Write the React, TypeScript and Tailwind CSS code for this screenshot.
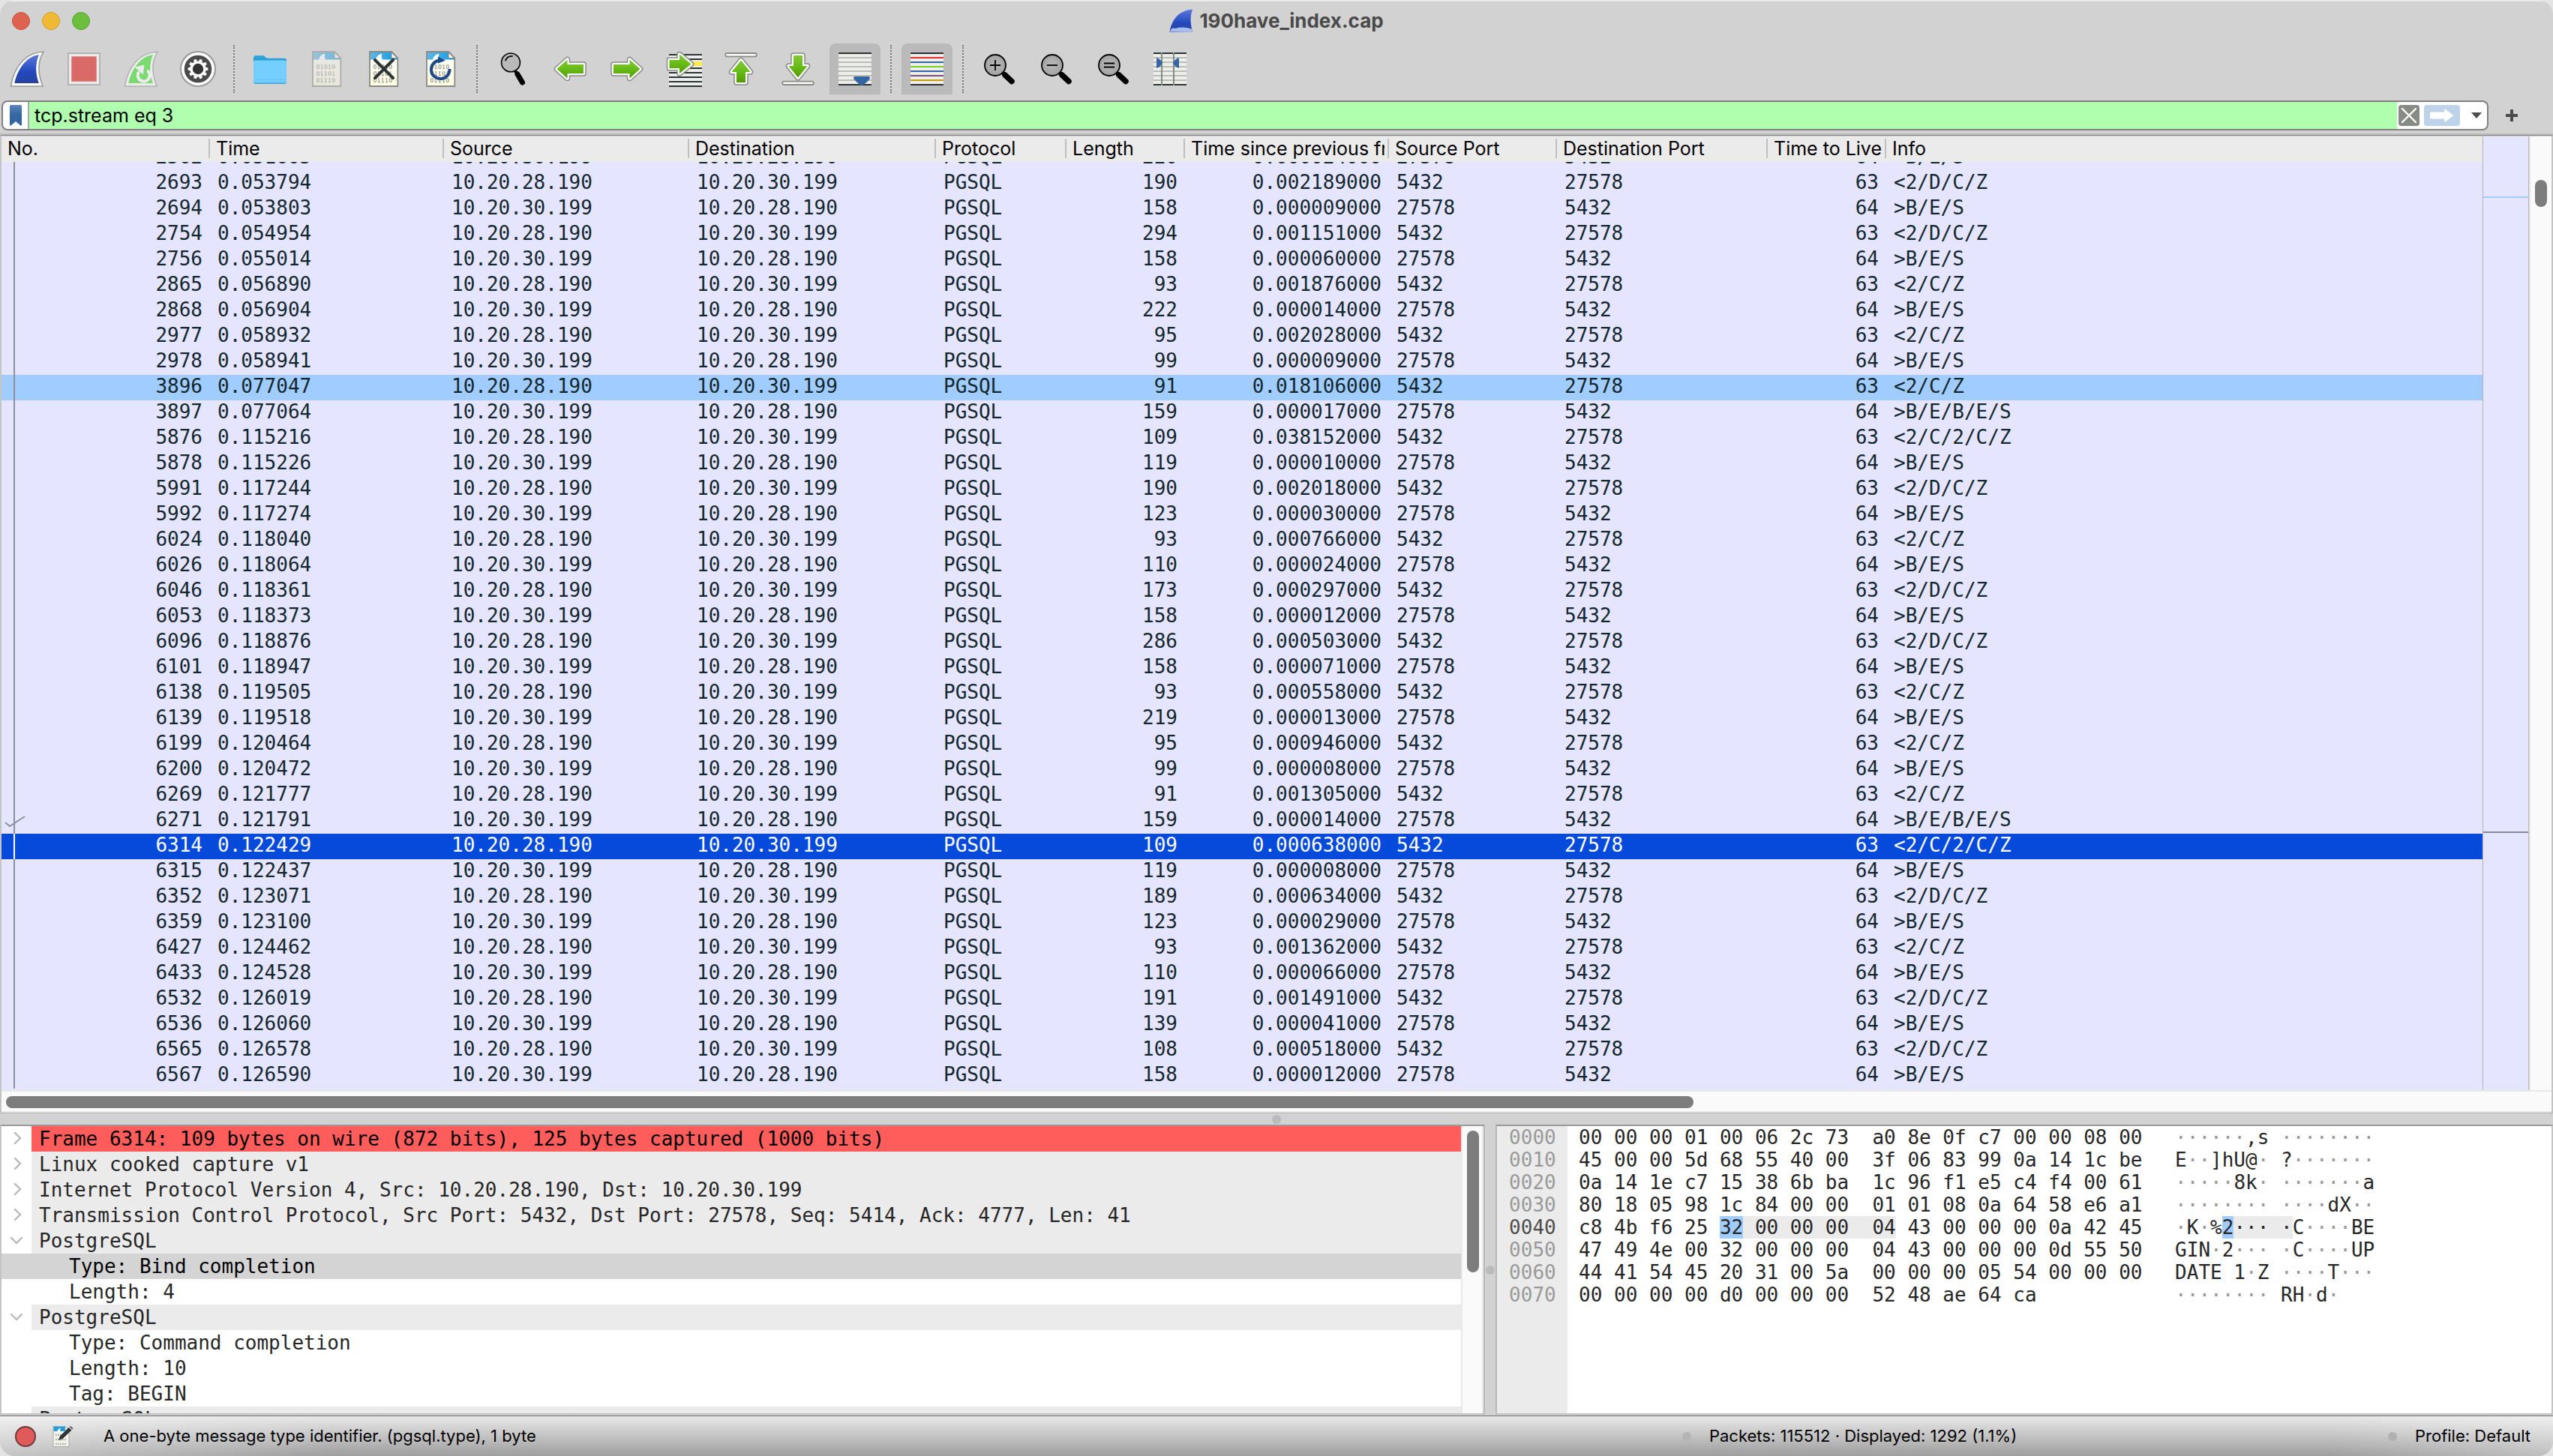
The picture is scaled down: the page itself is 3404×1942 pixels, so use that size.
import React from "react";

const MONO = "font-['DejaVu_Sans_Mono','Liberation_Mono',monospace] text-[26px]";

type Packet = {
  no: string;
  time: string;
  length: string;
  delta: string;
  info: string;
};

const packets: Packet[] = [
  ["2562", "0.051605", "220", "0.000024000", ">B/E/S"],
  ["2693", "0.053794", "190", "0.002189000", "<2/D/C/Z"],
  ["2694", "0.053803", "158", "0.000009000", ">B/E/S"],
  ["2754", "0.054954", "294", "0.001151000", "<2/D/C/Z"],
  ["2756", "0.055014", "158", "0.000060000", ">B/E/S"],
  ["2865", "0.056890", "93", "0.001876000", "<2/C/Z"],
  ["2868", "0.056904", "222", "0.000014000", ">B/E/S"],
  ["2977", "0.058932", "95", "0.002028000", "<2/C/Z"],
  ["2978", "0.058941", "99", "0.000009000", ">B/E/S"],
  ["3896", "0.077047", "91", "0.018106000", "<2/C/Z"],
  ["3897", "0.077064", "159", "0.000017000", ">B/E/B/E/S"],
  ["5876", "0.115216", "109", "0.038152000", "<2/C/2/C/Z"],
  ["5878", "0.115226", "119", "0.000010000", ">B/E/S"],
  ["5991", "0.117244", "190", "0.002018000", "<2/D/C/Z"],
  ["5992", "0.117274", "123", "0.000030000", ">B/E/S"],
  ["6024", "0.118040", "93", "0.000766000", "<2/C/Z"],
  ["6026", "0.118064", "110", "0.000024000", ">B/E/S"],
  ["6046", "0.118361", "173", "0.000297000", "<2/D/C/Z"],
  ["6053", "0.118373", "158", "0.000012000", ">B/E/S"],
  ["6096", "0.118876", "286", "0.000503000", "<2/D/C/Z"],
  ["6101", "0.118947", "158", "0.000071000", ">B/E/S"],
  ["6138", "0.119505", "93", "0.000558000", "<2/C/Z"],
  ["6139", "0.119518", "219", "0.000013000", ">B/E/S"],
  ["6199", "0.120464", "95", "0.000946000", "<2/C/Z"],
  ["6200", "0.120472", "99", "0.000008000", ">B/E/S"],
  ["6269", "0.121777", "91", "0.001305000", "<2/C/Z"],
  ["6271", "0.121791", "159", "0.000014000", ">B/E/B/E/S"],
  ["6314", "0.122429", "109", "0.000638000", "<2/C/2/C/Z"],
  ["6315", "0.122437", "119", "0.000008000", ">B/E/S"],
  ["6352", "0.123071", "189", "0.000634000", "<2/D/C/Z"],
  ["6359", "0.123100", "123", "0.000029000", ">B/E/S"],
  ["6427", "0.124462", "93", "0.001362000", "<2/C/Z"],
  ["6433", "0.124528", "110", "0.000066000", ">B/E/S"],
  ["6532", "0.126019", "191", "0.001491000", "<2/D/C/Z"],
  ["6536", "0.126060", "139", "0.000041000", ">B/E/S"],
  ["6565", "0.126578", "108", "0.000518000", "<2/D/C/Z"],
  ["6567", "0.126590", "158", "0.000012000", ">B/E/S"],
].map(([no, time, length, delta, info]) => ({ no, time, length, delta, info }));

const columns = [
  { name: "No.", width: "w-[276px]" },
  { name: "Time", width: "w-[312px]" },
  { name: "Source", width: "w-[327px]" },
  { name: "Destination", width: "w-[329px]" },
  { name: "Protocol", width: "w-[174px]" },
  { name: "Length", width: "w-[158px]" },
  { name: "Time since previous frame", width: "w-[272px]" },
  { name: "Source Port", width: "w-[224px]" },
  { name: "Destination Port", width: "w-[281px]" },
  { name: "Time to Live", width: "w-[158px]" },
  { name: "Info", width: "w-auto" },
];

const hexRows = [
  ["0000", "00 00 00 01 00 06 2c 73  a0 8e 0f c7 00 00 08 00", "······,s ········"],
  ["0010", "45 00 00 5d 68 55 40 00  3f 06 83 99 0a 14 1c be", "E··]hU@· ?·······"],
  ["0020", "0a 14 1e c7 15 38 6b ba  1c 96 f1 e5 c4 f4 00 61", "·····8k· ·······a"],
  ["0030", "80 18 05 98 1c 84 00 00  01 01 08 0a 64 58 e6 a1", "········ ····dX··"],
  ["0040", "c8 4b f6 25 32 00 00 00  04 43 00 00 00 0a 42 45", "·K·%2··· ·C····BE"],
  ["0050", "47 49 4e 00 32 00 00 00  04 43 00 00 00 0d 55 50", "GIN·2··· ·C····UP"],
  ["0060", "44 41 54 45 20 31 00 5a  00 00 00 05 54 00 00 00", "DATE 1·Z ····T···"],
  ["0070", "00 00 00 00 d0 00 00 00  52 48 ae 64 ca", "········ RH·d·"],
];

/* ---------- toolbar icons, all on a 48 px grid ---------- */

function Svg({ children }: { children: React.ReactNode }) {
  return (
    <svg viewBox="0 0 48 48" className="size-12" aria-hidden="true">
      {children}
    </svg>
  );
}

function Gradients() {
  return (
    <svg className="absolute size-0" aria-hidden="true">
      <defs>
        <linearGradient id="finBlue" x1="0" y1="0" x2="0" y2="1">
          <stop offset="0" stopColor="#5a78dc" />
          <stop offset="0.6" stopColor="#2448bd" />
          <stop offset="1" stopColor="#27429f" />
        </linearGradient>
        <linearGradient id="green" x1="0" y1="0" x2="0" y2="1">
          <stop offset="0" stopColor="#80c83c" />
          <stop offset="0.5" stopColor="#68bc16" />
          <stop offset="1" stopColor="#4e9a06" />
        </linearGradient>
        <linearGradient id="folder" x1="0" y1="0" x2="0" y2="1">
          <stop offset="0" stopColor="#34aadc" />
          <stop offset="1" stopColor="#0e84c4" />
        </linearGradient>
        <linearGradient id="docTop" x1="0" y1="0" x2="1" y2="0">
          <stop offset="0" stopColor="#62b6e2" />
          <stop offset="1" stopColor="#0e9de6" />
        </linearGradient>
        <linearGradient id="docPaper" x1="0" y1="0" x2="0" y2="1">
          <stop offset="0" stopColor="#ffffff" />
          <stop offset="1" stopColor="#fffee0" />
        </linearGradient>
        <linearGradient id="bookmark" x1="0" y1="0" x2="0" y2="1">
          <stop offset="0" stopColor="#5b86b8" />
          <stop offset="0.5" stopColor="#3465a4" />
          <stop offset="1" stopColor="#3465a4" />
        </linearGradient>
        <radialGradient id="lens">
          <stop offset="0" stopColor="#bababa" />
          <stop offset="1" stopColor="#a2a2a2" />
        </radialGradient>
      </defs>
    </svg>
  );
}

const FIN_OUTER = "M2.5 47 C6 24 20 2 46 1.2 C38 14 38 29 45 47 Z";
const FIN_INNER = "M7.3 43 C11.5 25 22 7.5 40 5 C35 16 35 30 39.8 43 Z";

function StartIcon() {
  return (
    <Svg>
      <path d={FIN_OUTER} fill="#fff" stroke="#9a9a9a" strokeWidth="1.6" />
      <path d={FIN_INNER} fill="url(#finBlue)" />
    </Svg>
  );
}

function StopIcon() {
  return (
    <Svg>
      <rect x="3" y="3" width="42" height="42" fill="#ececec" stroke="#b3b3b3" strokeWidth="2" />
      <rect x="7.3" y="7.3" width="33.4" height="33.4" fill="#d96a68" />
    </Svg>
  );
}

function RestartIcon() {
  return (
    <Svg>
      <path d={FIN_OUTER} fill="#ececec" stroke="#b3b3b3" strokeWidth="1.6" />
      <path d={FIN_INNER} fill="#7ada70" />
      <path
        d="M20.5 29 A8 8 0 1 0 33.5 27"
        fill="none"
        stroke="#ececec"
        strokeWidth="4"
        strokeLinecap="round"
      />
      <path d="M15.5 21.5 L28.5 18.6 L26.8 31.5 Z" fill="#ececec" />
    </Svg>
  );
}

function GearIcon() {
  const teeth = [0, 36, 72, 108, 144, 180, 216, 252, 288, 324];
  return (
    <Svg>
      <circle cx="24" cy="24" r="23" fill="#fff" stroke="#9a9a9a" strokeWidth="2" />
      <circle cx="24" cy="24" r="18.3" fill="#4a4a4a" />
      <circle cx="24" cy="24" r="10.6" fill="#fff" />
      {teeth.map((a) => (
        <path key={a} d="M21.6 14 L22.4 10.6 H25.6 L26.4 14 Z" fill="#fff" transform={`rotate(${a + 18} 24 24)`} />
      ))}
      <circle cx="24" cy="24" r="7.2" fill="#333" />
    </Svg>
  );
}

function FolderIcon() {
  return (
    <Svg>
      <path d="M2 9 q0-3 3-3 h9 q2 0 3 1.2 l1.5 1.6 q1 1 3 1 h21.5 q3 0 3 3 v10 H2 Z" fill="url(#folder)" />
      <rect x="2" y="12.5" width="44" height="31.5" rx="3" fill="#4aa8dd" />
      <rect x="2" y="12.5" width="44" height="29.8" rx="2.5" fill="#74ceff" />
      <path d="M2.5 38.5 H45.5" stroke="#67bfee" strokeWidth="1" />
    </Svg>
  );
}

function Bits() {
  return (
    <g fill="none" stroke="#a9aaa3" strokeWidth="1.3">
      {[18.5, 27.5, 36.5].map((y, row) =>
        [0, 1, 2, 3, 4].map((i) => {
          const x = 11 + i * 5.2;
          const one = ["01010", "01101", "01110"][row][i] === "1";
          return one ? (
            <path key={`${y}-${i}`} d={`M${x - 0.5} ${y + 0.8} L${x + 1} ${y} V${y + 5} M${x - 0.5} ${y + 5} H${x + 2.6}`} />
          ) : (
            <ellipse key={`${y}-${i}`} cx={x + 1} cy={y + 2.6} rx="1.6" ry="2.4" />
          );
        })
      )}
    </g>
  );
}

function Page({ faded = false, children }: { faded?: boolean; children?: React.ReactNode }) {
  return (
    <Svg>
      <g opacity={faded ? 0.5 : 1}>
        <path d="M5 1 H34 L42.3 9.5 V47 H5 Z" fill="url(#docPaper)" />
        <path d="M5 1 H34 V9.5 H42 V11.5 H5 Z" fill="url(#docTop)" />
        <path d="M13 11.8 C14 7 17 4.5 21.5 3.5 C20.5 6 20.7 9 22 11.8 Z" fill="#fff" />
        <path d="M34 1 L42.3 9.5 H34 Z" fill="#fff" stroke="#888a85" strokeWidth="1.2" />
        <path d="M5 1 H34 L42.3 9.5 V47 H5 Z" fill="none" stroke="#888a85" strokeWidth="1.8" />
        <Bits />
      </g>
      {children}
    </Svg>
  );
}

function CloseFileIcon() {
  return (
    <Page>
      <path d="M12 12 L36 36 M36 12 L12 36" stroke="#2e3436" strokeWidth="4" strokeLinecap="round" />
    </Page>
  );
}

function ReloadIcon() {
  return (
    <Page>
      <path d="M22 12.5 A12.3 12.3 0 1 0 35.5 24" fill="none" stroke="#204a87" strokeWidth="4" />
      <path d="M20 7.5 L30 12.8 L20 16.5 Z" fill="#204a87" />
    </Page>
  );
}

function FindIcon() {
  return (
    <Svg>
      <circle cx="21" cy="15.4" r="12.4" fill="#b9b9b9" stroke="#000" strokeWidth="1.6" />
      <path d="M14 12.5 Q16.5 6.5 23 6.8" fill="none" stroke="#000" strokeWidth="1.8" strokeLinecap="round" />
      <path d="M27 27 L30 31" stroke="#000" strokeWidth="4" />
      <path d="M30 31 L36.5 42" stroke="#000" strokeWidth="7" strokeLinecap="round" />
    </Svg>
  );
}

function Arrow({ d }: { d: string }) {
  return (
    <g strokeLinejoin="round">
      <path d={d} fill="#888a85" stroke="#888a85" strokeWidth="7.6" />
      <path d={d} fill="#fff" stroke="#fff" strokeWidth="4.6" />
      <path d={d} fill="url(#green)" />
    </g>
  );
}

const BackIcon = () => (
  <Svg>
    <Arrow d="M6.5 24 L20.5 11.5 V18 H42 V30 H20.5 V36.5 Z" />
  </Svg>
);
const ForwardIcon = () => (
  <Svg>
    <Arrow d="M41.5 24 L27.5 11.5 V18 H6 V30 H27.5 V36.5 Z" />
  </Svg>
);
const GoToIcon = () => (
  <Svg>
    <rect x="4" y="4" width="44" height="44" fill="#eeeeec" />
    <rect x="34" y="14" width="14" height="6" fill="#fce94f" />
    <path
      d="M4 5 H48 M4 11 H48 M4 23 H48 M4 29 H48 M4 35 H48 M4 41 H48 M4 47 H48"
      stroke="#2e3436"
      strokeWidth="2"
    />
    <Arrow d="M4.5 12 H18 V4.5 L33.5 17.5 L18 30 V23 H4.5 Z" />
  </Svg>
);
const FirstIcon = () => (
  <Svg>
    <rect x="3.2" y="3" width="41.6" height="4.4" rx="2" fill="#fff" stroke="#888a85" strokeWidth="1.8" />
    <Arrow d="M24 12.5 L36.5 28 H30 V42 H18 V28 H11.5 Z" />
  </Svg>
);
const LastIcon = () => (
  <Svg>
    <rect x="3.2" y="40.6" width="41.6" height="4.4" rx="2" fill="#fff" stroke="#888a85" strokeWidth="1.8" />
    <Arrow d="M24 35.5 L11.5 20 H18 V6 H30 V20 H36.5 Z" />
  </Svg>
);

function Lines({ colors }: { colors: string[] }) {
  return (
    <>
      <rect x="2" y="2" width="44" height="44" fill="#eeeeec" />
      {["#2e3436", ...colors, "#2e3436"].map((c, i) => (
        <rect key={i} x="2" y={2 + i * 6} width="44" height="2" fill={c} />
      ))}
    </>
  );
}

const GRAY_LINES = ["#babdb6", "#babdb6", "#babdb6", "#babdb6", "#babdb6", "#babdb6"];

const AutoScrollIcon = () => (
  <Svg>
    <Lines colors={GRAY_LINES} />
    <path d="M24 34 H42 Q45 34.5 43.5 37.5 Q40 42 35 45 Q33 46.5 31 45 Q26 42 22.5 37.5 Q21 34.5 24 34 Z" fill="#3465a4" />
  </Svg>
);
const ColorizeIcon = () => (
  <Svg>
    <Lines colors={["#ef2929", "#3465a4", "#73d216", "#3465a4", "#75507b", "#c4a000"]} />
  </Svg>
);
const ResizeIcon = () => (
  <Svg>
    <Lines colors={GRAY_LINES} />
    <path d="M13 2 V46 M29 2 V46" stroke="#888a85" strokeWidth="2" />
    <path d="M6 9 Q12 11 14 16 Q12 21 6 23 Z M36 9 Q30 11 28 16 Q30 21 36 23 Z" fill="#3465a4" />
  </Svg>
);

function ZoomIcon({ mark }: { mark: string }) {
  return (
    <Svg>
      <path d="M32 32 L41 40.5" stroke="#000" strokeWidth="7.5" strokeLinecap="round" />
      <path d="M28 28 L33 33" stroke="#000" strokeWidth="5" />
      <circle cx="19" cy="19" r="14" fill="url(#lens)" stroke="#000" strokeWidth="1.8" />
      <path d={mark} stroke="#000" strokeWidth="1.8" />
    </Svg>
  );
}

/* ---------- toolbar ---------- */

function ToolButton({ label, active, children }: { label: string; active?: boolean; children: React.ReactNode }) {
  return (
    <button
      type="button"
      aria-label={label}
      title={label}
      className={
        "flex size-[68px] shrink-0 items-center justify-center rounded-t-lg " + (active ? "bg-[#bababa]" : "")
      }
    >
      {children}
    </button>
  );
}

function Separator() {
  return <div className="mx-[5px] h-[64px] border-l-2 border-dotted border-[#7a7a7a]" />;
}

function Toolbar() {
  return (
    <div className="flex items-center gap-2 pb-2 pl-0.5" role="toolbar">
      <ToolButton label="Start capturing packets"><StartIcon /></ToolButton>
      <ToolButton label="Stop capturing packets"><StopIcon /></ToolButton>
      <ToolButton label="Restart current capture"><RestartIcon /></ToolButton>
      <ToolButton label="Capture options"><GearIcon /></ToolButton>
      <Separator />
      <ToolButton label="Open a capture file"><FolderIcon /></ToolButton>
      <ToolButton label="Save this capture file"><Page faded /></ToolButton>
      <ToolButton label="Close this capture file"><CloseFileIcon /></ToolButton>
      <ToolButton label="Reload this file"><ReloadIcon /></ToolButton>
      <Separator />
      <ToolButton label="Find a packet"><FindIcon /></ToolButton>
      <ToolButton label="Go back"><BackIcon /></ToolButton>
      <ToolButton label="Go forward"><ForwardIcon /></ToolButton>
      <ToolButton label="Go to specified packet"><GoToIcon /></ToolButton>
      <ToolButton label="Go to the first packet"><FirstIcon /></ToolButton>
      <ToolButton label="Go to the last packet"><LastIcon /></ToolButton>
      <ToolButton label="Auto scroll in live capture" active><AutoScrollIcon /></ToolButton>
      <Separator />
      <ToolButton label="Colorize packets" active><ColorizeIcon /></ToolButton>
      <Separator />
      <ToolButton label="Zoom in"><ZoomIcon mark="M12 19 H26 M19 12 V26" /></ToolButton>
      <ToolButton label="Zoom out"><ZoomIcon mark="M12 19 H26" /></ToolButton>
      <ToolButton label="Normal size"><ZoomIcon mark="M12 16.5 H26 M12 21.5 H26" /></ToolButton>
      <ToolButton label="Resize columns"><ResizeIcon /></ToolButton>
    </div>
  );
}

function FilterBar() {
  return (
    <div className="flex h-10 items-center pl-0.5">
      <div className="flex h-10 flex-1 items-center overflow-hidden rounded-lg border-2 border-[#808080] bg-white">
        <button type="button" aria-label="Filter bookmarks" className="flex h-full w-[35px] items-center justify-center border-r-2 border-[#a8a8a8]">
          <svg viewBox="0 0 16 28" className="h-7 w-4" aria-hidden="true">
            <path d="M0 1.5 Q0 0 1.5 0 H14.5 Q16 0 16 1.5 V26 Q16 28 14.5 27.5 L8 22 L1.5 27.5 Q0 28 0 26 Z" fill="url(#bookmark)" />
          </svg>
        </button>
        <input
          aria-label="Display filter"
          defaultValue="tcp.stream eq 3"
          className="h-full min-w-0 flex-1 bg-[#afffaf] pl-[7px] text-[25px] text-black outline-none"
        />
        <button type="button" aria-label="Clear filter" className="ml-0.5 flex h-7 w-7 items-center justify-center rounded bg-[#888a85]">
          <svg viewBox="0 0 28 28" className="size-7" aria-hidden="true">
            <path d="M5 5 L23 23 M23 5 L5 23" stroke="#fff" strokeWidth="2.4" strokeLinecap="round" />
          </svg>
        </button>
        <button type="button" aria-label="Apply filter" className="ml-1.5 flex h-7 w-12 items-center justify-center rounded bg-[#bed2ea]">
          <svg viewBox="0 0 32 18" className="h-[18px] w-8" aria-hidden="true">
            <path d="M1.5 4.5 H19 V1.5 Q19.5 0 21 1 L31.5 9 L21 17 Q19.5 18 19 16.5 V13.5 H1.5 Q0 13.5 0 12 V6 Q0 4.5 1.5 4.5 Z" fill="#fff" />
          </svg>
        </button>
        <button type="button" aria-label="Recent filters" className="flex h-full w-9 items-center justify-center pl-2">
          <svg viewBox="0 0 14 12" className="h-3 w-3.5" aria-hidden="true">
            <path d="M0 2 H14 L7 10 Z" fill="#4c4c4c" />
          </svg>
        </button>
      </div>
      <button type="button" aria-label="Add filter button" className="flex h-10 w-[86px] items-center justify-center pr-6">
        <svg viewBox="0 0 16 16" className="size-4" aria-hidden="true">
          <path d="M8 0 V16 M0 8 H16" stroke="#4a4a4a" strokeWidth="4" />
        </svg>
      </button>
    </div>
  );
}

/* ---------- packet list ---------- */

function Cell({ first, right, children }: { first: boolean; right?: boolean; children: React.ReactNode }) {
  return (
    <td className="p-0 align-top">
      <div
        className={
          "flex items-end overflow-hidden pr-2 pl-3 leading-[30px] whitespace-pre " +
          (first ? "h-3 " : "h-[34px] ") +
          (right ? "justify-end" : "")
        }
      >
        <span className="h-[34px] shrink-0">{children}</span>
      </div>
    </td>
  );
}

function PacketRow({ p, first }: { p: Packet; first: boolean }) {
  const fromServer = p.info.startsWith("<");
  const selected = p.no === "6314";
  const source = fromServer ? "10.20.28.190" : "10.20.30.199";
  const destination = fromServer ? "10.20.30.199" : "10.20.28.190";
  return (
    <tr
      aria-selected={selected}
      className={selected ? "bg-[#064adc] text-white" : p.no === "3896" ? "bg-[#a0ccff]" : ""}
    >
      <td className="p-0 align-top">
        <div
          className={
            "relative flex items-end justify-between overflow-hidden pr-2 pl-4 leading-[30px] " +
            (first ? "h-3" : "h-[34px]")
          }
        >
          <span className={"h-full w-0.5 " + (selected ? "bg-white" : "bg-[#8a919c]")} />
          {p.no === "6271" && (
            <svg viewBox="0 0 28 16" className="absolute top-2.5 left-1 h-4 w-7" aria-hidden="true">
              <path d="M1 9 L7 14 L27 1" fill="none" stroke="#8a919c" strokeWidth="2" />
            </svg>
          )}
          <span className="h-[34px] shrink-0">{p.no}</span>
        </div>
      </td>
      <Cell first={first}>{p.time}</Cell>
      <Cell first={first}>{source}</Cell>
      <Cell first={first}>{destination}</Cell>
      <Cell first={first}>PGSQL</Cell>
      <Cell first={first} right>{p.length}</Cell>
      <Cell first={first} right>{p.delta}</Cell>
      <Cell first={first}>{fromServer ? "5432" : "27578"}</Cell>
      <Cell first={first}>{fromServer ? "27578" : "5432"}</Cell>
      <Cell first={first} right>{fromServer ? "63" : "64"}</Cell>
      <Cell first={first}>{p.info}</Cell>
    </tr>
  );
}

function PacketList() {
  return (
    <section className="border-x-2 border-t border-b border-x-[#c4c4c4] border-t-[#858585] border-b-[#b0b0b0]">
      <div className="flex border-t border-[#d0d0d0]">
        <div className="min-w-0 flex-1 bg-[#e5e5ff] pb-0.5">
          <table className="w-full table-fixed border-collapse">
            <colgroup>
              {columns.map((c) => (
                <col key={c.name} className={c.width} />
              ))}
            </colgroup>
            <thead className="bg-[#ebebeb]">
              <tr>
                {columns.map((c, i) => (
                  <th key={c.name} scope="col" className="h-[34px] p-0 text-left align-middle text-[25px] font-normal text-black">
                    <div className="flex items-center pr-1 pb-0.5">
                      {i > 0 && <span className="h-[26px] w-0.5 shrink-0 bg-[#bfbfbf]" />}
                      <span className="ml-2 overflow-hidden leading-[30px] whitespace-nowrap">{c.name}</span>
                    </div>
                  </th>
                ))}
              </tr>
            </thead>
            <tbody className={MONO + " text-[#12272e]"}>
              {packets.map((p, i) => (
                <PacketRow key={p.no} p={p} first={i === 0} />
              ))}
            </tbody>
          </table>
        </div>
        <div className="w-[62px] border-x border-[#b4b4b4] bg-[#e5e5ff]">
          <div className="mt-20 h-0.5 bg-[#a0ccff]" />
          <div className="mt-[845px] h-0.5 bg-[#858a94]" />
        </div>
        <div className="w-[30px] border-l-2 border-[#e6e6e6] bg-[#fafafa] pt-[58px] pl-1.5">
          <div className="h-9 w-4 rounded-full bg-[#7d7d7d]" />
        </div>
      </div>
      <div className="border-y-2 border-[#e8e8e8] bg-[#fafafa] pt-1.5 pb-1 pl-1.5">
        <div className="h-4 w-[66.3%] rounded-full bg-[#7d7d7d]" />
      </div>
    </section>
  );
}

/* ---------- packet details ---------- */

type TreeRow = { text: string; open?: boolean; child?: boolean; tone?: "error" | "selected" };

const tree: TreeRow[] = [
  { text: "Frame 6314: 109 bytes on wire (872 bits), 125 bytes captured (1000 bits)", open: false, tone: "error" },
  { text: "Linux cooked capture v1", open: false },
  { text: "Internet Protocol Version 4, Src: 10.20.28.190, Dst: 10.20.30.199", open: false },
  { text: "Transmission Control Protocol, Src Port: 5432, Dst Port: 27578, Seq: 5414, Ack: 4777, Len: 41", open: false },
  { text: "PostgreSQL", open: true },
  { text: "Type: Bind completion", child: true, tone: "selected" },
  { text: "Length: 4", child: true },
  { text: "PostgreSQL", open: true },
  { text: "Type: Command completion", child: true },
  { text: "Length: 10", child: true },
  { text: "Tag: BEGIN", child: true },
  { text: "PostgreSQL", open: true },
];

function TreeLine({ row }: { row: TreeRow }) {
  const selected = row.tone === "selected";
  const bg = row.tone === "error" ? "bg-[#ff5c5c] text-black" : row.child ? "" : "bg-[#ebebeb]";
  return (
    <li className={"flex h-[34px] shrink-0 leading-[34px] whitespace-pre " + (selected ? "bg-[#d4d4d4] text-black" : "")}>
      {row.child ? (
        <span className="w-10" />
      ) : (
        <button type="button" aria-label={row.open ? "Collapse" : "Expand"} className="flex w-10 items-center justify-center">
          <svg viewBox="0 0 20 20" className="size-5" fill="none" stroke="#b4b4b4" strokeWidth="2.2" strokeLinecap="round" aria-hidden="true">
            <path d={row.open ? "M3 6 L10 13 L17 6" : "M8 2 L15 9 L8 16"} />
          </svg>
        </button>
      )}
      <span className={"flex-1 " + (row.child ? "pl-[50px] " : "pl-2.5 ") + bg}>{row.text}</span>
    </li>
  );
}

function Details() {
  return (
    <section className="flex w-[58.17%] border-2 border-t-[#9a9a9a] border-r-[#b8b8b8] border-b-[#c4c4c4] border-l-[#c4c4c4] bg-white">
      <ul className={"flex min-w-0 flex-1 flex-col overflow-hidden text-[#262626] " + MONO}>
        {tree.map((row, i) => (
          <TreeLine key={i} row={row} />
        ))}
      </ul>
      <div className="w-[30px] border-x-2 border-[#e8e8e8] bg-[#fafafa] pt-1.5 pl-1.5">
        <div className="h-[189px] w-4 rounded-full bg-[#7d7d7d]" />
      </div>
    </section>
  );
}

/* ---------- packet bytes ---------- */

function Ascii({ text }: { text: string }) {
  return (
    <>
      {text.split(/(·+)/).map((part, i) =>
        part.startsWith("·") ? (
          <span key={i} className="text-[#999999]">{part}</span>
        ) : (
          part
        )
      )}
    </>
  );
}

function Bytes() {
  return (
    <section className="flex min-w-0 flex-1 border-2 border-t-[#9a9a9a] border-r-[#c4c4c4] border-b-[#c4c4c4] border-l-[#b8b8b8] bg-white">
      <div className={"flex-1 bg-[linear-gradient(to_right,#ebebeb_94px,#ffffff_94px)] text-[#262626] " + MONO}>
        {hexRows.map(([offset, hex, ascii]) => {
          const marked = offset === "0040";
          return (
            <div key={offset} className="flex leading-[30px] whitespace-pre">
              <span className={"w-[109px] shrink-0 pl-4 " + (marked ? "text-[#4d4d4d]" : "text-[#999999]")}>{offset}</span>
              <span className="w-[795px] shrink-0">
                {marked ? (
                  <>
                    {hex.slice(0, 12)}
                    <mark className="inline-block bg-[#a0ccff] text-inherit">{hex.slice(12, 14)}</mark>
                    <mark className="inline-block bg-[#ebebeb] text-inherit">{hex.slice(14, 27)}</mark>
                    {hex.slice(27)}
                  </>
                ) : (
                  hex
                )}
              </span>
              <span>
                {marked ? (
                  <>
                    <Ascii text={ascii.slice(0, 4)} />
                    <mark className="inline-block bg-[#a0ccff] text-inherit">{ascii.slice(4, 5)}</mark>
                    <mark className="inline-block bg-[#ebebeb] text-inherit">{ascii.slice(5, 10)}</mark>
                    <Ascii text={ascii.slice(10)} />
                  </>
                ) : (
                  <Ascii text={ascii} />
                )}
              </span>
            </div>
          );
        })}
      </div>
    </section>
  );
}

/* ---------- status bar ---------- */

function StatusBar() {
  return (
    <footer className="mt-px flex h-[54px] shrink-0 items-center rounded-b-[20px] border-t border-[#707070] bg-[linear-gradient(to_right,#ffffff66,#ffffff00_440px,#ffffff00_calc(100%-300px),#ffffff55),linear-gradient(to_bottom,#e8e8e8,#9e9e9e)] pr-[30px] pl-5 text-[22px] text-black">
      <button type="button" aria-label="Expert information" className="size-7 rounded-full border-2 border-[#6e3a3a] bg-[#e05a5a]" />
      <button type="button" aria-label="Capture file comments" className="ml-[22px] size-7">
        <svg viewBox="0 0 28 28" className="size-7" aria-hidden="true">
          <path d="M1 0.5 H17 L22 5 V27.5 H1 Z" fill="#f4f4ec" stroke="#a8aaa4" />
          <path d="M1.5 1 H17 V7 H1.5 Z" fill="#1f9fe0" />
          <path d="M6 8 Q7 3.5 10.5 2.5 Q10 5 10.5 8 Z" fill="#fff" />
          <path d="M4 12 H18 M4 18 H18 M4 24 H18" stroke="#b4b6b0" strokeWidth="2.4" strokeDasharray="2 1" />
          <path d="M8 19 L10 13.5 L21.5 2 L25.5 5.5 L13.5 17 Z" fill="#2e3436" />
          <path d="M22.5 1 L24 0 L27.5 3 L26.3 4.6 Z" fill="#555753" />
        </svg>
      </button>
      <span className="ml-10 flex-1">A one-byte message type identifier. (pgsql.type), 1 byte</span>
      <span className="size-3 rounded-full bg-[#b4b4b4]" />
      <span className="ml-6 w-[905px]">Packets: 115512 · Displayed: 1292 (1.1%)</span>
      <span className="size-3 rounded-full bg-[#b0b0b0]" />
      <span className="ml-6 text-right">Profile: Default</span>
    </footer>
  );
}

export default function App() {
  return (
    <div className="h-screen min-h-[1900px] bg-[#e4e4e4] font-['Inter','Liberation_Sans',sans-serif]">
      <Gradients />
      <div className="flex h-full flex-col overflow-hidden rounded-[20px] bg-[#d2d2d2]">
        <header className="relative flex h-[58px] shrink-0 items-center justify-center border-t-2 border-[#ececec] pb-1">
          <div className="absolute left-4 flex gap-4">
            <button type="button" aria-label="Close" className="size-6 rounded-full border border-[#c9503f] bg-[#de6250]" />
            <button type="button" aria-label="Minimize" className="size-6 rounded-full border border-[#d39f2c] bg-[#efb935]" />
            <button type="button" aria-label="Zoom window" className="size-6 rounded-full border border-[#58a431] bg-[#6bbf3d]" />
          </div>
          <svg viewBox="0 0 32 32" className="size-8" aria-hidden="true">
            <path d="M0.5 31 C3 15 12 2 31 0.5 C27.5 10 28 21 31.5 31 Z" fill="url(#finBlue)" />
            <path d="M0.8 30.5 Q3 24 8 26 Q18 23 30 26.5 L31.5 31 Z" fill="#a9bdf0" />
          </svg>
          <h1 className="ml-2 text-[26px] leading-8 font-bold text-[#4a4a4a]">190have_index.cap</h1>
        </header>
        <Toolbar />
        <FilterBar />
        <div className="mt-1 h-0.5 shrink-0 bg-[#bcbcbc]" />
        <PacketList />
        <div className="flex h-[15px] shrink-0 items-center justify-center">
          <span className="size-3 rounded-full bg-[#bababa]" />
        </div>
        <main className="flex min-h-0 flex-1">
          <Details />
          <div className="flex w-3.5 shrink-0 items-center justify-center">
            <span className="size-3 rounded-full bg-[#bababa]" />
          </div>
          <Bytes />
        </main>
        <StatusBar />
      </div>
    </div>
  );
}
